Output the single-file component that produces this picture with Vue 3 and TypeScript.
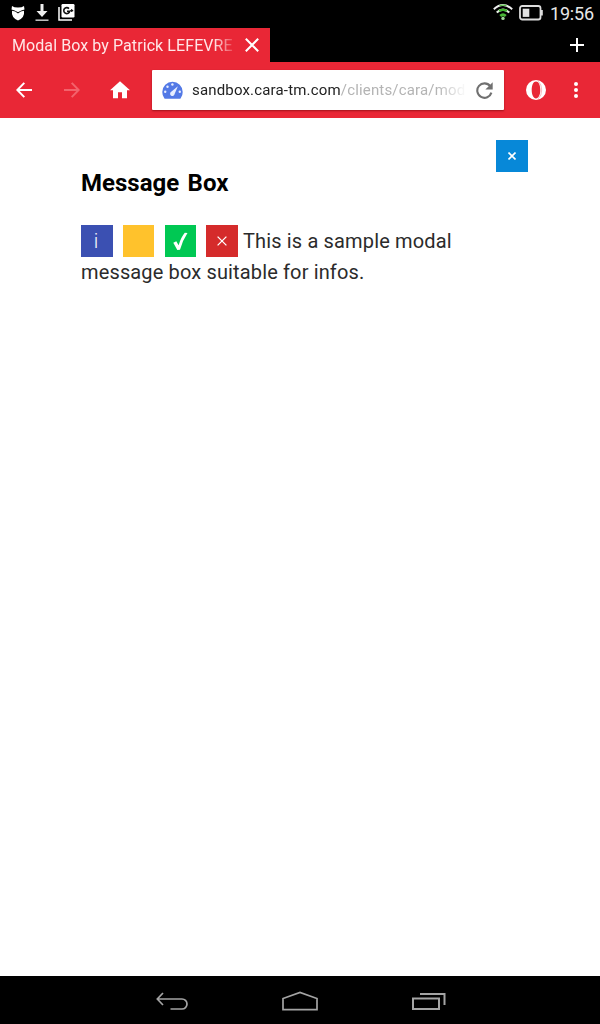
<script setup lang="ts">
import { ref } from 'vue'

interface Tile {
  kind: 'info' | 'warning' | 'success' | 'error'
  glyph: string
}

const tabTitle = 'Modal Box by Patrick LEFEVRE'
const urlHost = 'sandbox.cara-tm.com'
const urlPath = '/clients/cara/mod'
const clock = '19:56'

const tiles = ref<Tile[]>([
  { kind: 'info', glyph: 'i' },
  { kind: 'warning', glyph: '' },
  { kind: 'success', glyph: '' },
  { kind: 'error', glyph: '' },
])
</script>

<template>
  <div class="device">
    <header class="status">
      <svg class="st-owl" width="14" height="16" viewBox="0 0 14 16">
        <path d="M1 1Q3 2.600 7 2.600T13 1L13.500 4.500Q10.500 5 7 7.300Q3.500 5 .5 4.500Z" fill="#fff" />
        <path d="M1 5.700Q4.500 6 7 8.500Q9.500 6 13 5.700Q14 12.500 7 15.500Q0 12.500 1 5.700Z" fill="#fff" />
      </svg>
      <svg class="st-down" width="14" height="18" viewBox="0 0 14 18">
        <path d="M5.500 0h3v7h4L7 13 1.500 7h4z" fill="#eee" />
        <path d="M.5 16.200h13" stroke="#bbb" stroke-width="1.600" />
      </svg>
      <svg class="st-gplus" width="17" height="17" viewBox="0 0 17 17">
        <path d="M1 3v13h13" fill="none" stroke="#fff" stroke-width="1.500" />
        <rect x="3.500" y="0" width="13" height="13.500" rx="1.200" fill="#fff" />
        <path d="M11 4.600a3 3 0 1 0 .7 2.700H9" fill="none" stroke="#111" stroke-width="1.600" />
        <path d="M12.200 6.600h3M13.700 5.100v3" stroke="#111" stroke-width="1.100" />
      </svg>
      <span class="spacer"></span>
      <svg class="st-wifi" width="20" height="17" viewBox="0 0 20 17">
        <path d="M.8 5.200Q10-3 19.200 5.200" fill="none" stroke="#eee" stroke-width="1.900" />
        <path d="M6.500 1.600Q10 .7 13.500 1.600" fill="none" stroke="#55bd45" stroke-width="1.300" />
        <path d="M3.700 8.500Q10 2.700 16.300 8.500" fill="none" stroke="#e4eee2" stroke-width="2" />
        <path d="M6 6.800Q10 4.800 14 6.800" fill="none" stroke="#40b52f" stroke-width="2.200" />
        <path d="M6.300 11Q10 7.700 13.700 11L11.800 13Q10 11.600 8.200 13Z" fill="#49b637" />
        <circle cx="10" cy="14.400" r="1.700" fill="#a5d99d" />
      </svg>
      <svg class="st-batt" width="24" height="16" viewBox="0 0 24 16">
        <rect x="1" y="1" width="20.500" height="13.500" rx="2.300" fill="none" stroke="#ddd" stroke-width="1.800" />
        <rect x="3.700" y="3.700" width="6.600" height="8.200" fill="#e2e2e2" />
        <path d="M22.900 5v5.500" stroke="#ddd" stroke-width="1.800" />
      </svg>
      <span class="clock">{{ clock }}</span>
    </header>

    <div class="tabs">
      <div class="tab">
        <span class="tab-title">{{ tabTitle }}</span>
        <svg width="14" height="14" viewBox="0 0 14 14">
          <path d="M.8.8 13.200 13.200M13.200.8.8 13.200" stroke="#fff" stroke-width="2" />
        </svg>
      </div>
      <svg class="add" width="14" height="14" viewBox="0 0 14 14">
        <path d="M0 7h14M7 0v14" stroke="#fff" stroke-width="2" />
      </svg>
    </div>

    <nav class="toolbar">
      <svg class="nav-back" width="16" height="16" viewBox="0 0 16 16">
        <path d="M16 8H1.500M8.300.9 1.300 8l7 7.100" fill="none" stroke="#fff" stroke-width="2" />
      </svg>
      <svg class="nav-fwd" width="16" height="16" viewBox="0 0 16 16">
        <path d="M0 8h14.500M7.700.9l7 7.100-7 7.100" fill="none" stroke="#f3626c" stroke-width="2" />
      </svg>
      <svg class="nav-home" width="20" height="18" viewBox="0 0 20 18">
        <path d="M10 .2 0 9.300h3v8h5v-6h4v6h5v-8h3z" fill="#fff" />
      </svg>
      <div class="address">
        <svg class="gauge" width="21" height="18" viewBox="0 0 21 18">
          <path d="M2.300 17.300A10 10 0 0 1 .3 11a10.200 10.200 0 0 1 20.400 0 10 10 0 0 1-2 6.300q-.4.5-1 .5H3.300q-.6 0-1-.5z" fill="#5379e6" />
          <g fill="#e7edff">
            <circle cx="3.200" cy="10.800" r="1.200" />
            <circle cx="5.500" cy="5.800" r="1.200" />
            <circle cx="10.400" cy="3.500" r="1.200" />
            <circle cx="17.800" cy="10.800" r="1.200" />
            <path d="M15.900 5.200 12.700 12.800a2.300 2.300 0 1 1-3.500-2.100z" />
          </g>
        </svg>
        <span class="url"><span>{{ urlHost }}</span><span class="path">{{ urlPath }}</span></span>
        <svg class="reload" width="17" height="17" viewBox="0 0 17 17">
          <path d="M14.200 4.200A7.200 7.200 0 1 0 15.400 10.600" fill="none" stroke="#707070" stroke-width="2.100" />
          <path d="M16.700.2v7.300H9.400z" fill="#707070" />
        </svg>
      </div>
      <svg class="opera" width="20" height="20" viewBox="0 0 20 20">
        <path fill-rule="evenodd" d="M10 0a10 10 0 1 0 0 20 10 10 0 0 0 0-20zm0 1.600c2.500 0 4.300 3.500 4.300 8.400s-1.800 8.400-4.300 8.400S5.700 14.900 5.700 10 7.500 1.600 10 1.600z" fill="#fff" />
        <path d="M12.200 1.200q3.500 3 3.500 8.800t-3.500 8.800" fill="none" stroke="#f1747d" stroke-width=".5" />
      </svg>
      <svg class="dots" width="4" height="16" viewBox="0 0 4 16">
        <g fill="#fff"><circle cx="2" cy="2" r="2" /><circle cx="2" cy="8" r="2" /><circle cx="2" cy="14" r="2" /></g>
      </svg>
    </nav>

    <main class="page">
      <button class="close" aria-label="Close">
        <svg width="8" height="8" viewBox="0 0 8 8">
          <path d="M.5.5l7 7M7.500.5l-7 7" stroke="#fff" stroke-width="1.600" />
        </svg>
      </button>
      <h1>Message Box</h1>
      <div class="message">
        <div class="first">
          <span v-for="tile in tiles" :key="tile.kind" class="tile" :class="tile.kind">
            <template v-if="tile.glyph">{{ tile.glyph }}</template>
            <svg v-else-if="tile.kind === 'success'" width="15" height="19" viewBox="0 0 15 19">
              <path d="M.3 10.700 3.300 9.300 5.600 13.200Q8 5.300 11.800.8L14.500.9Q9.700 8 7 17.700L4.300 18Z" fill="#fff" />
            </svg>
            <svg v-else-if="tile.kind === 'error'" width="10" height="10" viewBox="0 0 10 10">
              <path d="M.6.6l8.800 8.800M9.400.6.6 9.400" stroke="#fff" stroke-width="1.300" />
            </svg>
          </span>
          <span class="lead">This is a sample modal</span>
        </div>
        <div class="second">message box suitable for infos.</div>
      </div>
    </main>

    <footer class="softkeys">
      <svg class="k-back" width="33" height="19" viewBox="0 0 33 19">
        <path d="M7 1 1.300 7 7 13M1.500 7H26a5 5 0 0 1 0 10H14.500" fill="none" stroke="#a4a4a4" stroke-width="1.700" />
      </svg>
      <svg class="k-home" width="36" height="20" viewBox="0 0 36 20">
        <path d="M1 18.700V7.500L18 1.500l17 6v11.200z" fill="none" stroke="#a4a4a4" stroke-width="1.700" />
      </svg>
      <svg class="k-recent" width="34" height="18" viewBox="0 0 34 18">
        <rect x="1" y="5.500" width="26" height="10.500" fill="none" stroke="#a4a4a4" stroke-width="2" />
        <path d="M8 1h24.500V12" fill="none" stroke="#a4a4a4" stroke-width="2" />
      </svg>
    </footer>
  </div>
</template>

<style>
body {
  margin: 0;
}
</style>

<style scoped>
.device {
  width: 600px;
  height: 1024px;
  display: flex;
  flex-direction: column;
  background: #fff;
  font-family: Roboto, "Liberation Sans", sans-serif;
  overflow: hidden;
}
svg {
  display: block;
  flex: none;
}
.status {
  height: 28px;
  box-sizing: border-box;
  display: flex;
  align-items: flex-start;
  padding: 4px 6px 0 11px;
  background: #000;
}
.st-owl { margin-top: 1px; }
.st-down { margin-left: 10px; }
.st-gplus { margin-left: 9px; }
.spacer { flex: 1; }
.st-wifi { margin-right: 6px; }
.st-batt { margin-top: 1px; }
.clock {
  width: 44px;
  margin-left: 7px;
  font-size: 18px;
  line-height: 20px;
  letter-spacing: -0.2px;
  color: #e8e8e8;
  white-space: nowrap;
}
.tabs {
  height: 34px;
  display: flex;
  align-items: center;
  justify-content: space-between;
  background: #000;
}
.tab {
  width: 270px;
  height: 34px;
  box-sizing: border-box;
  padding: 0 11px 0 12px;
  display: flex;
  align-items: center;
  justify-content: space-between;
  background: #e92736;
}
.tab-title {
  width: 222px;
  overflow: hidden;
  white-space: nowrap;
  font-size: 16px;
  line-height: 34px;
  padding-top: 1px;
  letter-spacing: 0.08px;
  color: #ffe6e7;
  mask-image: linear-gradient(to right, #000 202px, transparent 226px);
}
.add { margin-right: 16px; }
.toolbar {
  height: 56px;
  flex: none;
  display: flex;
  align-items: center;
  background: #e92736;
}
.nav-back { margin-left: 16px; }
.nav-fwd { margin-left: 32px; }
.nav-home { margin-left: 30px; }
.address {
  width: 352px;
  height: 40px;
  box-sizing: border-box;
  margin-left: 22px;
  padding: 0 11px 0 10px;
  display: flex;
  align-items: center;
  background: #fff;
  border-radius: 1px;
  box-shadow: 0 1px 2px rgba(90, 0, 0, 0.5);
}
.url {
  width: 273px;
  margin-left: 9px;
  overflow: hidden;
  white-space: nowrap;
  font-size: 15px;
  line-height: 20px;
  letter-spacing: 0.17px;
  color: #222;
  mask-image: linear-gradient(to right, #000 245px, transparent 275px);
}
.path { color: #b4b4b4; }
.reload { margin-left: auto; }
.opera { margin-left: 22px; }
.dots { margin-left: 28px; }
.page {
  flex: 1;
  display: flex;
  flex-direction: column;
  padding: 22px 72px 0 81px;
  background: #fff;
}
.close {
  width: 32px;
  height: 32px;
  padding: 0;
  border: 0;
  display: flex;
  align-items: center;
  justify-content: center;
  align-self: flex-end;
  background: #0788d8;
}
h1 {
  margin: -5px 0 0;
  font-size: 24px;
  line-height: 32px;
  font-weight: 700;
  letter-spacing: 0;
  word-spacing: 2.500px;
  color: #000;
}
.message {
  margin-top: 26px;
  font-size: 20px;
  line-height: 31px;
  letter-spacing: 0.15px;
  color: #2b2b2b;
  white-space: nowrap;
}
.first {
  height: 32px;
  display: flex;
  line-height: 33px;
}
.tile {
  width: 32px;
  height: 32px;
  flex: none;
  margin-right: 10px;
  display: flex;
  align-items: center;
  justify-content: center;
  color: #fff;
}
.info {
  background: #3b50b2;
  font-weight: 300;
  padding-right: 2px;
  box-sizing: border-box;
}
.warning {
  width: 31px;
  margin-right: 11px;
  background: #ffc22c;
}
.success {
  width: 31px;
  background: #00c853;
}
.error {
  margin-right: 5px;
  padding-right: 1px;
  box-sizing: border-box;
  background: #d52b2b;
}
.second { letter-spacing: 0.14px; }
.softkeys {
  height: 48px;
  flex: none;
  box-sizing: border-box;
  display: flex;
  align-items: flex-start;
  padding: 15px 0 0 156px;
  background: #000;
}
.k-back { margin-top: 1px; }
.k-home { margin-left: 93px; }
.k-recent { margin-left: 94px; margin-top: 2px; }
</style>
